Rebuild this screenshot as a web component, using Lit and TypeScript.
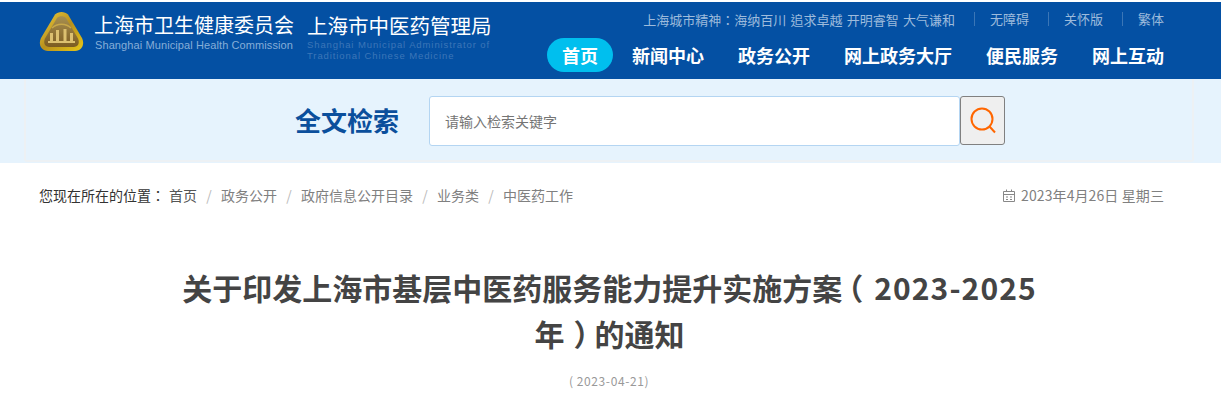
import { LitElement, html, css, svg } from "lit";
import { customElement } from "lit/decorators.js";

const crumbs = ["政务公开", "政府信息公开目录", "业务类", "中医药工作"];
const nav = ["新闻中心", "政务公开", "网上政务大厅", "便民服务", "网上互动"];

const logo = svg`<svg width="45" height="41" viewBox="0 0 45 41">
  <defs>
    <linearGradient id="g" x1="0" y1="0" x2="1" y2="1">
      <stop offset="0" stop-color="#f0d040"/><stop offset=".5" stop-color="#b8901c"/><stop offset="1" stop-color="#e8c818"/>
    </linearGradient>
    <linearGradient id="h" x1="0" y1="0" x2="0" y2="1">
      <stop offset="0" stop-color="#a89050"/><stop offset="1" stop-color="#7c5c22"/>
    </linearGradient>
  </defs>
  <path d="M16 3.5 C19 0 26 0 29 3.5 L43 27 C46 33 43 40 36 40 L9 40 C2 40 -1 33 2 27 Z" fill="url(#g)"/>
  <path d="M18 7 C20 4.5 25 4.5 27 7 L39 27.5 C41 32 39 36 34.500 36 L10.500 36 C6 36 4 32 6 27.500 Z" fill="url(#h)"/>
  <path d="M9 30 H36 V32 H9 Z M11 22 H14 V30 H11 Z M17 19 H20 V30 H17 Z M24.500 18 H27.500 V30 H24.500 Z M31 22 H34 V30 H31 Z" fill="#dcc070"/>
  <path d="M13 17 C18 12 27 12 32 17" fill="none" stroke="#c8a84a" stroke-width="1.500"/>
</svg>`;

@customElement("app-root")
export class AppRoot extends LitElement {
  static styles = css`
    :host { display: block; background: #fff; font-family: "Noto Sans CJK SC", "Liberation Sans", sans-serif; height: 404px; overflow: hidden; }
    * { box-sizing: border-box; }
    .header { margin-top: 2px; height: 77px; background: #0450a3; display: flex; justify-content: space-between; padding: 0 57px 0 39px; }
    .brand { display: flex; align-items: flex-start; padding-top: 9px; }
    .logo { display: block; margin-right: 10px; }
    .org { width: 213px; padding-top: 1px; }
    .org.second { width: 190px; }
    .org b { display: block; font-weight: 400; font-size: 20px; line-height: 26px; color: #fff; white-space: nowrap; }
    .org.second b { font-size: 20.500px; }
    .org span { display: block; font-family: "Liberation Sans", sans-serif; font-size: 11px; line-height: 11px; margin-top: 2px; padding-left: 1px; color: #86aed8; white-space: nowrap; letter-spacing: .1px; }
    .org.second span { font-size: 9.500px; color: #3c76b8; letter-spacing: .9px; margin-top: 0; padding-left: 0; }
    .org.second b + span { margin-top: 1px; }
    .right { display: flex; flex-direction: column; align-items: flex-end; }
    .util { display: flex; align-items: center; height: 33px; font-size: 13px; color: #9dbbdc; padding-top: 1px; }
    .util > span { word-spacing: 1.300px; font-family: "Noto Sans CJK TC", sans-serif; }
    .util a { display: block; line-height: 14px; padding-left: 15px; margin-left: 19px; border-left: 1px solid #3b76b6; }
    .nav { display: flex; gap: 34px; align-items: center; height: 34px; margin-top: 3px; font-size: 18px; font-weight: 700; color: #fff; line-height: 34px; }
    .nav .on { background: #00bfee; border-radius: 17px; padding: 0 15px; margin: 0 -15px; }
    .search { height: 84px; background: #e6f3fd; padding: 0 27px 1px 24px; }
    .frame { height: 100%; background: #e6f3fd; border: solid #edf1f4; border-width: 0 2px 2px; border-radius: 0 0 3px 3px; display: flex; align-items: flex-start; padding-top: 17px; }
    .search h2 { margin: 0 30px 0 269px; font-size: 26px; line-height: 48px; font-weight: 700; color: #0b4f9c; width: 104px; white-space: nowrap; }
    .box { width: 531px; height: 50px; background: #fff; border: 1px solid #b4d5f2; border-radius: 3px; padding-left: 15px; font-size: 14px; line-height: 48px; color: #757575; }
    .btn { width: 45px; height: 49px; background: #efefef; border: 1px solid #808080; border-radius: 3px; display: flex; align-items: center; justify-content: center; }
    .crumbrow { display: flex; justify-content: space-between; align-items: center; padding: 0 57px 0 39px; margin-top: 21px; height: 22px; font-size: 14px; color: #808080; }
    .crumbs { display: flex; align-items: center; }
    .crumbs .you { color: #333; font-family: "Noto Sans CJK TC", sans-serif; }
    .crumbs .home { color: #555; margin-left: 4px; }
    .crumbs i { font-style: normal; color: #bbb; width: 24px; text-align: center; }
    .date { display: flex; align-items: center; gap: 6px; }
    .date span { letter-spacing: .1px; }
    .title { width: 870px; margin: 0 auto; transform: translateX(-1px); padding-top: 58px; text-align: center; font-size: 30px; line-height: 46px; font-weight: 700; color: #444; }
    .title .open { display: inline-block; font-feature-settings: "halt"; margin: 0 9px 0 6px; }
    .title .close { display: inline-block; font-feature-settings: "halt"; margin: 0 6px 0 9px; }
    .title .n { letter-spacing: 1.100px; margin-left: 2px; }
    .pub { text-align: center; margin-top: 17px; margin-left: -3px; font-size: 12px; line-height: 16px; color: #999; letter-spacing: .6px; }
  `;

  render() {
    return html`
      <div class="header">
        <div class="brand">
          <div class="logo">${logo}</div>
          <div class="org"><b>上海市卫生健康委员会</b><span>Shanghai Municipal Health Commission</span></div>
          <div class="org second"><b>上海市中医药管理局</b><span>Shanghai Municipal Administrator of</span><span>Traditional Chinese Medicine</span></div>
        </div>
        <div class="right">
          <div class="util">
            <span>上海城市精神：海纳百川 追求卓越 开明睿智 大气谦和</span>
            <a>无障碍</a><a>关怀版</a><a>繁体</a>
          </div>
          <div class="nav">
            <span class="on">首页</span>
            ${nav.map((n) => html`<span>${n}</span>`)}
          </div>
        </div>
      </div>
      <div class="search">
        <div class="frame">
          <h2>全文检索</h2>
          <div class="box">请输入检索关键字</div>
          <div class="btn">
            <svg width="27" height="27" viewBox="0 0 27 27" fill="none" stroke="#ff6600" stroke-width="2">
              <circle cx="13" cy="12" r="10.500"/><path d="M20.500 19.500 L26 25.500"/>
            </svg>
          </div>
        </div>
      </div>
      <div class="crumbrow">
        <div class="crumbs">
          <span class="you">您现在所在的位置：</span><span class="home">首页</span>
          ${crumbs.map((c) => html`<i>/</i><span>${c}</span>`)}
        </div>
        <div class="date">
          <svg width="12" height="13" viewBox="0 0 12 13" fill="none" stroke="#888" stroke-width="1">
            <path d="M.5 2.500H11.500V12.500H.5Z M.5 5.500H11.500 M3.500 .5V2.500 M8.500 .5V2.500 M3 8H5 M7 8H9 M3 10.500H5 M7 10.500H9"/>
          </svg>
          <span>2023年4月26日 星期三</span>
        </div>
      </div>
      <div class="title">关于印发上海市基层中医药服务能力提升实施方案<span class="open">（</span><span class="n">2023-2025</span>年<span class="close">）</span>的通知</div>
      <div class="pub">( 2023-04-21)</div>
    `;
  }
}
